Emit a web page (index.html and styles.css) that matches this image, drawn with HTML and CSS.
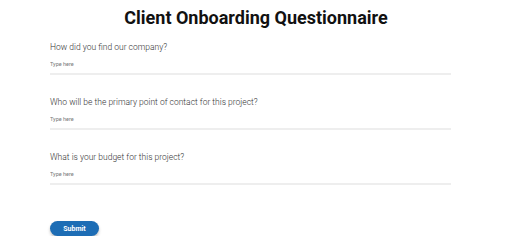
FILE: index.html
```html
<!DOCTYPE html>
<html lang="en">
<head>
    <meta charset="UTF-8">
    <meta name="viewport" content="width=device-width, initial-scale=1.0">
    <title>Client Onboarding Questionnaire</title>
    <link rel="stylesheet" href="styles.css">
</head>
<body>
    <div class="container">
        <h1>Client Onboarding Questionnaire</h1>
        <form class="form">
            <div class="question">
                <label>How did you find our company?</label>
                <input type="text" placeholder="Type here">
            </div>
            <div class="question">
                <label>Who will be the primary point of contact for this project?</label>
                <input type="text" placeholder="Type here">
            </div>
            <div class="question">
                <label>What is your budget for this project?</label>
                <input type="text" placeholder="Type here">
            </div>
            <button type="button" class="submit-btn">Submit</button>
        </form>
    </div>
</body>
</html>
```

FILE: styles.css
```css
body {
    margin: 0;
    font-family: Roboto, 'Liberation Sans', sans-serif;
    background: white;
    color: #222;
}
.container { width: 100%; }
h1 {
    margin: 0;
    padding-top: 7px;
    text-align: center;
    font-size: 18px;
    font-weight: bold;
    color: #111;
    line-height: 22px;
}
.form { width: 401px; margin: 0 0 0 50px; padding-top: 12px; }
.question { margin-bottom: 21px; }
label {
    display: block;
    font-size: 8.5px;
    font-weight: 300;
    color: #333;
    line-height: 12px;
}
input {
    display: block;
    width: 100%;
    box-sizing: border-box;
    border: none;
    border-bottom: 2px solid #eee;
    padding: 8px 0 6px 0;
    font-family: Roboto, 'Liberation Sans', sans-serif;
    font-size: 5.5px;
    outline: none;
    background: transparent;
}
input::placeholder { color: #777; }
.submit-btn {
    margin-top: 15px;
    width: 49px;
    height: 15px;
    border: none;
    border-radius: 8px;
    background: #1d6db5;
    color: white;
    font-family: Roboto, 'Liberation Sans', sans-serif;
    font-size: 7px;
    font-weight: bold;
    box-shadow: 0 2px 3px rgba(0,0,0,0.25);
    cursor: pointer;
}
```
